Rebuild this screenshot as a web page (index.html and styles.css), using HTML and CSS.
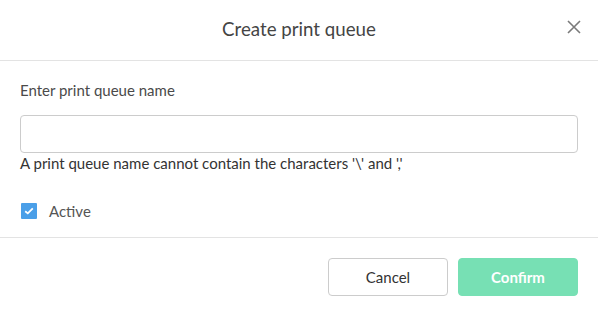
FILE: index.html
```html
<!DOCTYPE html>
<html lang="en">
<head>
  <meta charset="UTF-8" />
  <title>Create print queue</title>
  <link rel="stylesheet" href="styles.css">
</head>
<body>
  <div class="modal">
    <div class="modal-header">
      <h2 class="modal-title">Create print queue</h2>
      <button class="close-btn" aria-label="Close">
        <svg width="14" height="14" viewBox="0 0 14 14">
          <path d="M1 1 L13 13 M13 1 L1 13" stroke="#7a7a7a" stroke-width="1.6" fill="none" />
        </svg>
      </button>
    </div>
    <div class="modal-body">
      <label class="field-label" for="queue-name">Enter print queue name</label>
      <input class="text-input" id="queue-name" type="text" />
      <div class="field-hint">A print queue name cannot contain the characters '\' and ','</div>
      <label class="check-row">
        <span class="check-box">
          <svg width="10" height="8" viewBox="0 0 10 8">
            <path d="M1.2 4.2 L3.8 6.4 L8.8 1.4" stroke="#fff" stroke-width="1.8" fill="none" />
          </svg>
        </span>
        <span class="check-label">Active</span>
      </label>
    </div>
    <div class="modal-footer">
      <button class="btn btn-cancel">Cancel</button>
      <button class="btn btn-confirm">Confirm</button>
    </div>
  </div>
</body>
</html>
```
FILE: styles.css
```css
html, body {
  margin: 0;
  background: #fff;
  font-family: 'Lato', 'Liberation Sans', sans-serif;
  color: #444;
}

.modal {
  width: 598px;
  height: 316px;
  display: flex;
  flex-direction: column;
}

.modal-header {
  height: 60px;
  border-bottom: 1px solid #e3e3e3;
  display: flex;
  align-items: center;
  justify-content: center;
  position: relative;
}

.modal-title {
  margin: 0;
  font-size: 18.7px;
  font-weight: 400;
  color: #444;
  margin-top: -2px;
}

.close-btn {
  position: absolute;
  right: 17px;
  top: 20px;
  border: 0;
  background: none;
  padding: 0;
  width: 14px;
  height: 14px;
  display: flex;
  cursor: pointer;
}

.modal-body {
  padding: 19px 20px 16px;
  display: flex;
  flex-direction: column;
  border-bottom: 1px solid #e3e3e3;
}

.field-label {
  font-size: 15px;
  line-height: 20px;
  color: #4a4a4a;
  margin-bottom: 15px;
}

.text-input {
  height: 38px;
  box-sizing: border-box;
  border: 1px solid #cccccc;
  border-radius: 4px;
  outline: none;
  padding: 0 10px;
  font-family: inherit;
  font-size: 15px;
}

.field-hint {
  font-size: 15px;
  line-height: 20px;
  color: #333;
}

.check-row {
  margin-top: 28px;
  display: flex;
  align-items: center;
  gap: 12px;
  line-height: 20px;
  height: 20px;
}

.check-box {
  width: 16px;
  height: 16px;
  margin-left: 1px;
  background: #4a9fe8;
  border-radius: 1px;
  display: flex;
  align-items: center;
  justify-content: center;
}

.check-label {
  font-size: 15px;
  color: #555;
}

.modal-footer {
  display: flex;
  justify-content: flex-end;
  gap: 10px;
  padding: 20px 20px 0;
}

.btn {
  width: 120px;
  height: 38px;
  border-radius: 4px;
  font-family: inherit;
  font-size: 15px;
  cursor: pointer;
}

.btn-cancel {
  background: #fff;
  border: 1px solid #cccccc;
  color: #333;
}

.btn-confirm {
  background: #77e0b4;
  border: 1px solid #77e0b4;
  color: #fff;
  font-weight: 700;
}
```
